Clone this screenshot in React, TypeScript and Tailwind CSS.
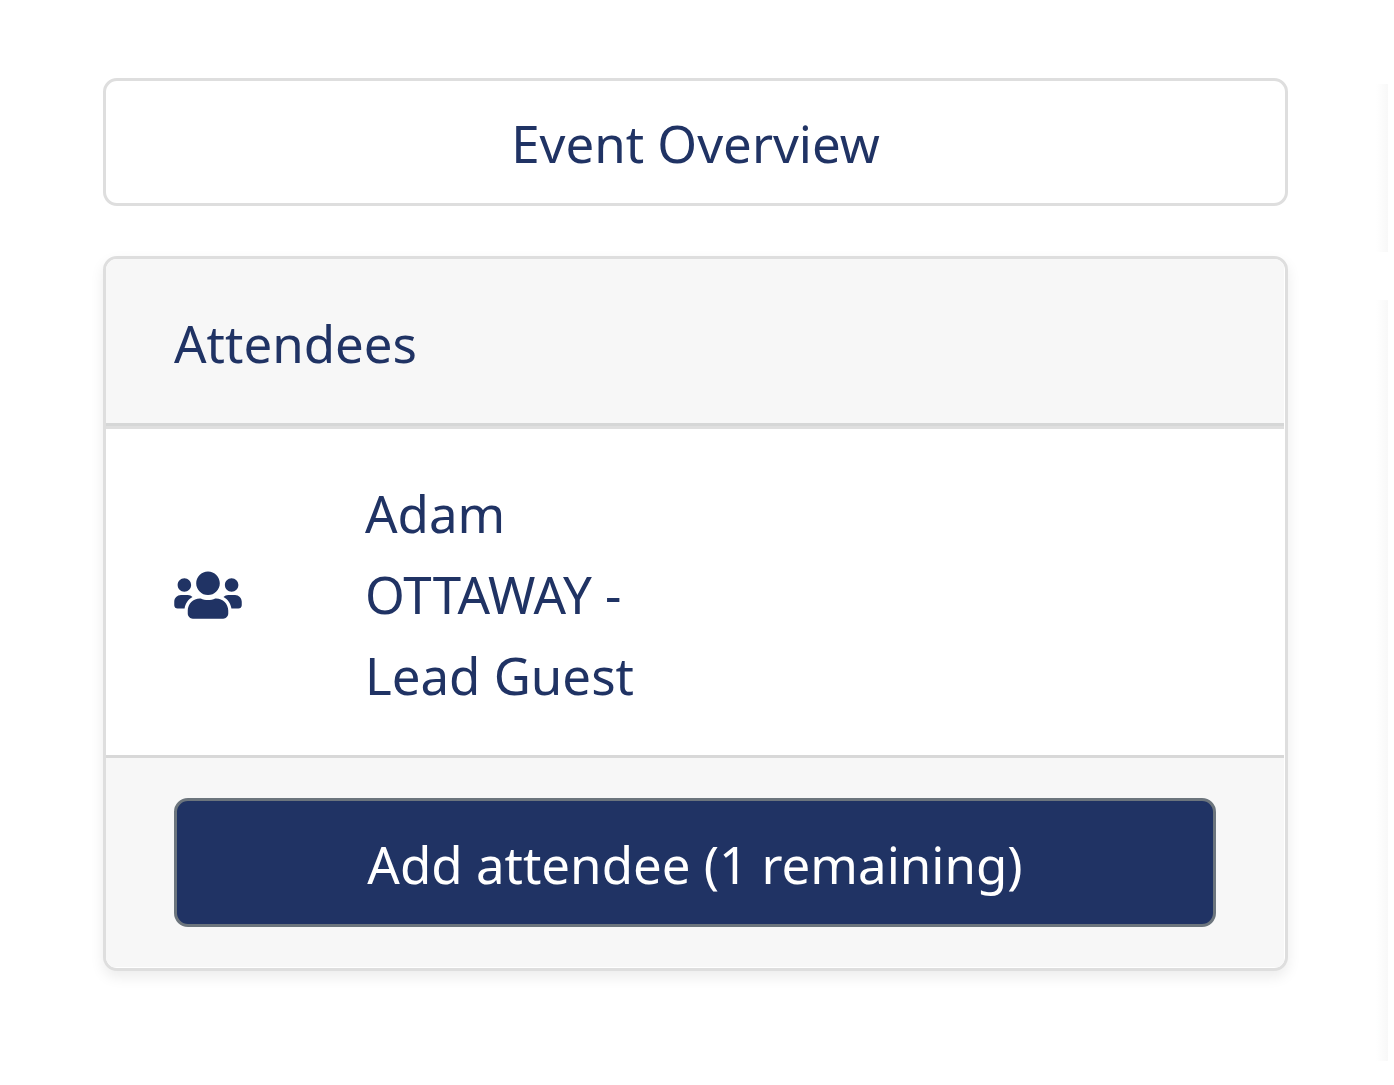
import React from 'react';
import { FaUsers } from 'react-icons/fa';

const App: React.FC = () => {
  return (
    <div className="flex min-h-screen bg-white font-['Noto_Sans',sans-serif] text-[51px] leading-[81px] text-[#203364]">
      <main className="flex-1 pt-[78px] pr-[88px] pb-24 pl-[103px]">
        <button
          type="button"
          className="block h-32 w-full rounded-[14px] border-3 border-[#dedede] bg-white pt-0.5 text-center"
        >
          Event Overview
        </button>

        <section className="mt-[50px] overflow-hidden rounded-[14px] border-3 border-[#dedede] bg-white pr-px pb-px shadow-[0_6px_14px_rgba(0,0,0,0.08)]">
          <header className="border-b-3 border-[#d6d7d7] bg-[#f7f7f7] px-[68px] pt-11 pb-[39px]">
            <h2>Attendees</h2>
          </header>

          <div className="flex items-center border-t-3 border-[#dfdfdf] px-[68px] pt-11 pb-[39px]">
            <FaUsers className="h-[54px] w-[68px]" />
            <p className="ml-[123px] w-[300px]">Adam OTTAWAY - Lead Guest</p>
          </div>

          <footer className="border-t-3 border-[#d8d8d8] bg-[#f7f7f7] px-[68px] py-10">
            <button
              type="button"
              className="block h-[129px] w-full rounded-[14px] border-3 border-[#6c757d] bg-[#203364] pt-1 text-center text-white"
            >
              Add attendee (1 remaining)
            </button>
          </footer>
        </section>
      </main>

      {/* soft edge of the neighbouring column */}
      <aside className="mr-1.5 flex w-3 flex-col gap-12 overflow-hidden pt-[84px] pb-6">
        <div className="h-[168px] bg-gradient-to-r from-white to-[#f8f8f8]" />
        <div className="flex-1 bg-gradient-to-r from-white to-[#f8f8f8]" />
      </aside>
    </div>
  );
};

export default App;
